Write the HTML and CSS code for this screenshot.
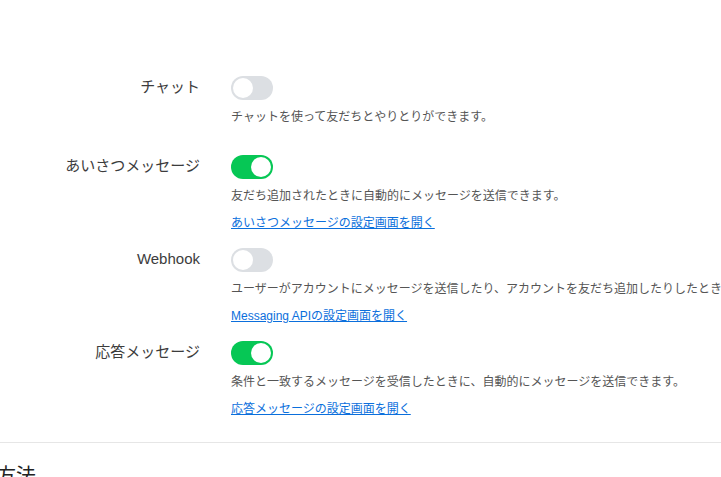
FILE: index.html
```html
<!doctype html>
<html lang="ja">
<head>
	<meta charset="UTF-8">
	<title>応答設定</title>
	<link rel="stylesheet" href="styles.css">
</head>
<body>
	<div class="settings">
		<div class="row">
			<div class="label">チャット</div>
			<div class="body">
				<span class="toggle"></span>
				<p class="desc">チャットを使って友だちとやりとりができます。</p>
			</div>
		</div>
		<div class="row">
			<div class="label">あいさつメッセージ</div>
			<div class="body">
				<span class="toggle on"></span>
				<p class="desc">友だち追加されたときに自動的にメッセージを送信できます。</p>
				<a href="javascript:;" class="link">あいさつメッセージの設定画面を開く</a>
			</div>
		</div>
		<div class="row">
			<div class="label">Webhook</div>
			<div class="body">
				<span class="toggle"></span>
				<p class="desc">ユーザーがアカウントにメッセージを送信したり、アカウントを友だち追加したりしたときに、Webhook URLにイベントが送信されます。</p>
				<a href="javascript:;" class="link">Messaging APIの設定画面を開く</a>
			</div>
		</div>
		<div class="row">
			<div class="label">応答メッセージ</div>
			<div class="body">
				<span class="toggle on"></span>
				<p class="desc">条件と一致するメッセージを受信したときに、自動的にメッセージを送信できます。</p>
				<a href="javascript:;" class="link">応答メッセージの設定画面を開く</a>
			</div>
		</div>
	</div>
	<div class="divider"></div>
	<h2 class="section">方法</h2>
</body>
</html>
```

FILE: styles.css
```css
html,body{margin: 0;padding: 0;}
body{
	background-color: #fff;
	font-family: "Liberation Sans", "Noto Sans CJK JP", sans-serif;
	color: #333;
	overflow: hidden;
}
p{margin: 0;}
.settings{
	padding-top: 76px;
}
.row{
	display: grid;
	grid-template-columns: 200px 1fr;
	column-gap: 31px;
	padding-bottom: 18px;
}
.label{
	text-align: right;
	font-size: 15px;
	line-height: 22px;
	color: #3c3c3c;
}
.body{
	display: flex;
	flex-direction: column;
	align-items: flex-start;
	min-width: 0;
}
.toggle{
	display: block;
	position: relative;
	width: 42px;
	height: 24px;
	border-radius: 12px;
	background-color: #dcdfe3;
	cursor: pointer;
}
.toggle:after{
	content: "";
	position: absolute;
	top: 2px;
	left: 2px;
	width: 20px;
	height: 20px;
	border-radius: 50%;
	background-color: #fff;
}
.toggle.on{
	background-color: #06c755;
}
.toggle.on:after{
	left: 20px;
}
.desc{
	margin-top: 8px;
	margin-bottom: 11px;
	font-size: 12px;
	line-height: 18px;
	color: #555;
	white-space: nowrap;
}
.link{
	font-size: 12px;
	line-height: 14px;
	color: #0b6fdc;
	text-decoration: underline;
	white-space: nowrap;
}
.divider{
	margin-top: 8px;
	border-top: 1px solid #e6e6e6;
}
.section{
	margin: 19px 0 0 -4px;
	font-size: 20px;
	font-weight: normal;
	line-height: 28px;
	color: #222;
}
```
